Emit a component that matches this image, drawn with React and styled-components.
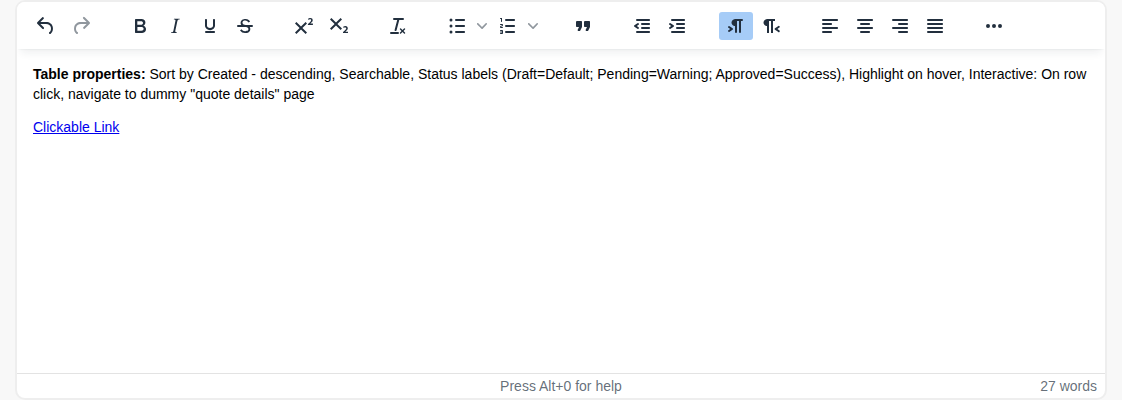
import React from "react";
import styled, { createGlobalStyle } from "styled-components";

const GlobalStyle = createGlobalStyle`
  *, *::before, *::after { box-sizing: border-box; }
  body {
    margin: 0;
    background: #f8f8f8;
    font-family: "Liberation Sans", Arial, sans-serif;
    overflow: hidden;
  }
`;

const Page = styled.div`
  height: 400px;
  padding: 0 15px;
`;

const Editor = styled.div`
  display: flex;
  flex-direction: column;
  height: 400px;
  border: 2px solid #eee;
  border-radius: 10px;
  background: #fff;
  overflow: hidden;
`;

const Toolbar = styled.div`
  position: relative;
  z-index: 1;
  flex: none;
  display: flex;
  gap: 25px;
  height: 47px;
  padding: 10px 12px 9px;
  background: #fff;
  box-shadow: 0 2px 2px -2px rgba(34, 47, 62, 0.1), 0 8px 8px -4px rgba(34, 47, 62, 0.07);
`;

const Group = styled.div`
  display: flex;
  gap: 1px;
`;

const ToolButton = styled.button`
  display: flex;
  align-items: center;
  justify-content: center;
  width: ${(p) => (p.$narrow ? 16 : 34)}px;
  height: 28px;
  padding: 0;
  border: 0;
  border-radius: 3px;
  background: ${(p) => (p.$active ? "#a6ccf7" : "transparent")};
  color: ${(p) => (p.$muted ? "rgba(34, 47, 62, 0.5)" : "#222f3e")};
`;

const SplitButton = styled.div`
  display: flex;
`;

const Glyph = styled.svg`
  display: block;
  flex: none;
  fill: currentColor;
`;

const Content = styled.div`
  flex: 1;
  padding: 15px 16px;
  font-size: 14px;
  line-height: 20px;
  color: #000;
`;

const Paragraph = styled.p`
  margin: 0 0 13px;
`;

const Link = styled.a`
  color: #0000ee;
  text-decoration: underline;
`;

const StatusBar = styled.div`
  flex: none;
  display: grid;
  grid-template-columns: 1fr auto 1fr;
  align-items: center;
  height: 25px;
  padding: 0 8px;
  border-top: 1px solid #e3e3e3;
  font-size: 14px;
  line-height: 24px;
  color: rgba(34, 47, 62, 0.7);
`;

const HelpText = styled.span`
  grid-column: 2;
`;

const WordCount = styled.span`
  justify-self: end;
`;

const bar = (x, y, w) =>
  `M${x + 1} ${y}h${w - 2}c.6 0 1 .4 1 1s-.4 1-1 1H${x + 1}a1 1 0 1 1 0-2Z`;
const dot = (x, y, r) => `M${x - r} ${y}a${r} ${r} 0 1 0 ${2 * r} 0a${r} ${r} 0 1 0 ${-2 * r} 0Z`;

const paths = {
  undo: "M6.4 8H12c3.7 0 6.2 2 6.8 5.1.6 2.7-.4 5.6-2.3 6.8a1 1 0 0 1-1-1.8c1.1-.6 1.8-2.7 1.4-4.6-.5-2.1-2.1-3.5-4.9-3.5H6.4l3.3 3.3a1 1 0 1 1-1.4 1.4l-5-5a1 1 0 0 1 0-1.4l5-5a1 1 0 0 1 1.4 1.4L6.4 8Z",
  redo: "M17.6 10H12c-2.8 0-4.4 1.4-4.9 3.5-.4 2 .3 4 1.4 4.6a1 1 0 1 1-1 1.8c-2-1.2-2.9-4.1-2.3-6.8.6-3 3-5.1 6.8-5.1h5.6l-3.3-3.3a1 1 0 1 1 1.4-1.4l5 5a1 1 0 0 1 0 1.4l-5 5a1 1 0 0 1-1.4-1.4l3.3-3.3Z",
  bold: "M7.8 19c-.3 0-.5 0-.6-.2l-.2-.5V5.7c0-.2 0-.4.2-.5l.6-.2h5c1.5 0 2.7.3 3.5 1 .7.6 1.1 1.4 1.1 2.5a3 3 0 0 1-.6 1.9c-.4.6-1 1-1.6 1.2.4.1.9.3 1.3.6s.8.7 1 1.2c.4.4.5 1 .5 1.6 0 1.3-.4 2.3-1.3 3-.8.7-2.1 1-3.8 1H7.8Zm5-8.3c.6 0 1.2-.1 1.6-.5.4-.3.6-.7.6-1.3 0-1.1-.8-1.7-2.3-1.7H9.3v3.5h3.4Zm.5 6c.7 0 1.3-.1 1.7-.4.4-.4.6-.9.6-1.5s-.2-1-.7-1.4c-.4-.3-1-.4-2-.4H9.4v3.8h4Z",
  italic: "m16.7 4.7-.1.9h-.3c-.6 0-1 0-1.4.3-.3.3-.4.6-.5 1.1l-2.1 9.8v.6c0 .5.4.8 1.4.8h.2l-.2.8H8l.2-.8h.2c1.1 0 1.8-.5 2-1.5l2-9.8.1-.5c0-.6-.4-.8-1.4-.8h-.3l.2-.9h5.8Z",
  underline: "M16 5c.6 0 1 .4 1 1v5.5a4 4 0 0 1-.4 1.8l-1 1.4a5.3 5.3 0 0 1-5.5 1 5 5 0 0 1-1.6-1c-.5-.4-.8-.9-1.1-1.4a4 4 0 0 1-.4-1.8V6c0-.6.4-1 1-1s1 .4 1 1v5.5c0 .3 0 .6.2 1l.6.7a3.3 3.3 0 0 0 2.2.8 3.4 3.4 0 0 0 2.2-.8c.3-.2.4-.5.6-.8l.2-.9V6c0-.6.4-1 1-1ZM8 17h8c.6 0 1 .4 1 1s-.4 1-1 1H8a1 1 0 0 1 0-2Z",
  strike: "M15.6 8.5c-.5-.7-1-1.1-1.3-1.3-.6-.4-1.3-.6-2-.6-2.7 0-2.8 1.7-2.8 2.1 0 1.6 1.8 2 3.2 2.3 4.4.9 4.6 2.8 4.6 3.9 0 1.4-.7 4.1-5 4.1A6.2 6.2 0 0 1 7 16.4l1.5-1.1c.4.6 1.6 2 3.7 2 1.6 0 2.5-.4 3-1.2.4-.8.3-2-.8-2.6-.7-.4-1.6-.7-2.9-1-1-.2-3.9-.8-3.9-3.6C7.6 6 10.3 5 12.4 5c2.9 0 4.2 1.6 4.7 2.4l-1.5 1.1ZM5 11h14a1 1 0 0 1 0 2H5a1 1 0 0 1 0-2Z",
  superscript: "M15 9.4 10.4 14l4.6 4.6-1.4 1.4L9 15.4 4.4 20 3 18.6 7.6 14 3 9.4 4.4 8 9 12.6 13.6 8 15 9.4Zm5.9 1.6h-5v-1l1-.8 1.7-1.6c.3-.5.5-.9.5-1.3 0-.3 0-.5-.2-.7-.2-.2-.5-.3-.9-.3l-.8.2-.7.4-.4-1.2c.2-.2.5-.4 1-.5.3-.2.8-.2 1.2-.2.8 0 1.4.2 1.8.6.4.4.6 1 .6 1.6 0 .5-.2 1-.5 1.5l-1.3 1.4-.6.5h2.6V11Z",
  subscript: "m10.4 10 4.6 4.6-1.4 1.4L9 11.4 4.4 16 3 14.6 7.6 10 3 5.4 4.4 4 9 8.6 13.6 4 15 5.4 10.4 10ZM21 19h-5v-1l1-.8 1.7-1.6c.3-.4.5-.8.5-1.2 0-.3 0-.6-.2-.7-.2-.2-.5-.3-.9-.3a2 2 0 0 0-.8.2l-.7.3-.4-1.1 1-.6 1.2-.2c.8 0 1.4.3 1.8.7.4.4.6.9.6 1.5s-.2 1.1-.5 1.6a8 8 0 0 1-1.3 1.3l-.6.6h2.6V19Z",
  clear: "M13.2 6a1 1 0 0 1 0 .2l-2.6 10a1 1 0 0 1-1 .8h-.2a.8.8 0 0 1-.8-1l2.6-10H8a1 1 0 1 1 0-2h9a1 1 0 0 1 0 2h-3.8ZM5 18h7a1 1 0 0 1 0 2H5a1 1 0 0 1 0-2Zm13 1.5L16.5 18 15 19.5a.7.7 0 0 1-1-1l1.5-1.5-1.5-1.5a.7.7 0 0 1 1-1l1.5 1.5 1.5-1.5a.7.7 0 0 1 1 1L17.5 17l1.5 1.5a.7.7 0 0 1-1 1Z",
  bullets: bar(10, 5, 10) + bar(10, 11, 10) + bar(10, 17, 10) + dot(6, 6, 1.5) + dot(6, 12, 1.5) + dot(6, 18, 1.5),
  numbers: bar(9, 5, 10) + bar(9, 11, 10) + bar(9, 17, 10) +
    "M6 4v3.5c0 .3-.2.5-.5.5a.5.5 0 0 1-.5-.5V5h-.5a.5.5 0 0 1 0-1H6Zm-1 8.8.2.2h1.3c.3 0 .5.2.5.5s-.2.5-.5.5H4.9a1 1 0 0 1-.9-1V13c0-.4.3-.8.6-1l1.2-.4.2-.3a.2.2 0 0 0-.2-.2H4.5a.5.5 0 0 1-.5-.5c0-.3.2-.5.5-.5h1.6c.5 0 .9.4.9 1v.1c0 .4-.3.8-.6 1l-1.2.4-.2.3ZM7 17v2c0 .6-.4 1-1 1H4.5a.5.5 0 0 1 0-1h1.2c.2 0 .3-.1.3-.3 0-.2-.1-.3-.3-.3H4.4a.4.4 0 1 1 0-.8h1.3c.2 0 .3-.1.3-.3 0-.2-.1-.3-.3-.3H4.5a.5.5 0 1 1 0-1H6c.6 0 1 .4 1 1Z",
  quote: "M7.5 17h.9c.4 0 .7-.2.9-.6L11 13V8c0-.6-.4-1-1-1H6a1 1 0 0 0-1 1v4c0 .6.4 1 1 1h2l-1.3 2.7a1 1 0 0 0 .8 1.3Zm8 0h.9c.4 0 .7-.2.9-.6L19 13V8c0-.6-.4-1-1-1h-4a1 1 0 0 0-1 1v4c0 .6.4 1 1 1h2l-1.3 2.7a1 1 0 0 0 .8 1.3Z",
  outdent: bar(6, 5, 14) + bar(11, 9, 9) + bar(11, 13, 9) + bar(6, 17, 14) +
    "M8.6 13.2a1 1 0 0 1-1.2 1.6l-3-2a1 1 0 0 1 0-1.6l3-2a1 1 0 0 1 1.2 1.6L6.8 12l1.8 1.2Z",
  indent: bar(6, 5, 14) + bar(11, 9, 9) + bar(11, 13, 9) + bar(6, 17, 14) +
    "M4.4 13.2 6.2 12l-1.8-1.2a1 1 0 0 1 1.2-1.6l3 2a1 1 0 0 1 0 1.6l-3 2a1 1 0 1 1-1.2-1.6Z",
  ltr: "M11 5h7a1 1 0 0 1 0 2h-1v11a1 1 0 0 1-2 0V7h-2v11a1 1 0 0 1-2 0v-6c-.5 0-1 0-1.4-.3A3.4 3.4 0 0 1 7.8 10a3.3 3.3 0 0 1 0-2.8 3.4 3.4 0 0 1 1.8-1.8L11 5ZM4.4 16.2 6.2 15l-1.8-1.2a1 1 0 0 1 1.2-1.6l3 2a1 1 0 0 1 0 1.6l-3 2a1 1 0 1 1-1.2-1.6Z",
  rtl: "M8 5h8v2h-2v12h-2V7h-2v12H8v-7c-.5 0-1 0-1.4-.3A3.4 3.4 0 0 1 4.8 10a3.3 3.3 0 0 1 0-2.8 3.4 3.4 0 0 1 1.8-1.8L8 5Zm12 11.2a1 1 0 1 1-1 1.6l-3-2a1 1 0 0 1 0-1.6l3-2a1 1 0 1 1 1 1.6L18.4 15l1.8 1.2Z",
  alignLeft: bar(4, 5, 16) + bar(4, 9, 10) + bar(4, 13, 16) + bar(4, 17, 10),
  alignCenter: bar(4, 5, 16) + bar(7, 9, 10) + bar(4, 13, 16) + bar(7, 17, 10),
  alignRight: bar(4, 5, 16) + bar(10, 9, 10) + bar(4, 13, 16) + bar(10, 17, 10),
  justify: bar(4, 5, 16) + bar(4, 9, 16) + bar(4, 13, 16) + bar(4, 17, 16),
  more: dot(6, 12, 2) + dot(12, 12, 2) + dot(18, 12, 2),
  chevron: "M8.7 2.2c.3-.3.8-.3 1 0 .4.4.4.9 0 1.2L5.7 7.8c-.3.3-.9.3-1.2 0L.2 3.4a.8.8 0 0 1 0-1.2c.3-.3.8-.3 1.1 0L5 6l3.7-3.8Z",
};

function Tool({ name, label, active, muted }) {
  return (
    <ToolButton aria-label={label} $active={active} $muted={muted}>
      <Glyph width="24" height="24" viewBox="0 0 24 24">
        <path d={paths[name]} />
      </Glyph>
    </ToolButton>
  );
}

function SplitTool({ name, label }) {
  return (
    <SplitButton>
      <Tool name={name} label={label} />
      <ToolButton aria-label={`${label} menu`} $narrow $muted>
        <Glyph width="10" height="10" viewBox="0 0 10 10">
          <path d={paths.chevron} />
        </Glyph>
      </ToolButton>
    </SplitButton>
  );
}

export default function App() {
  return (
    <Page>
      <GlobalStyle />
      <Editor>
        <Toolbar role="toolbar">
          <Group>
            <Tool name="undo" label="Undo" />
            <Tool name="redo" label="Redo" muted />
          </Group>
          <Group>
            <Tool name="bold" label="Bold" />
            <Tool name="italic" label="Italic" />
            <Tool name="underline" label="Underline" />
            <Tool name="strike" label="Strikethrough" />
          </Group>
          <Group>
            <Tool name="superscript" label="Superscript" />
            <Tool name="subscript" label="Subscript" />
          </Group>
          <Group>
            <Tool name="clear" label="Clear formatting" />
          </Group>
          <Group>
            <SplitTool name="bullets" label="Bullet list" />
            <SplitTool name="numbers" label="Numbered list" />
          </Group>
          <Group>
            <Tool name="quote" label="Blockquote" />
          </Group>
          <Group>
            <Tool name="outdent" label="Decrease indent" />
            <Tool name="indent" label="Increase indent" />
          </Group>
          <Group>
            <Tool name="ltr" label="Left to right" active />
            <Tool name="rtl" label="Right to left" />
          </Group>
          <Group>
            <Tool name="alignLeft" label="Align left" />
            <Tool name="alignCenter" label="Align center" />
            <Tool name="alignRight" label="Align right" />
            <Tool name="justify" label="Justify" />
          </Group>
          <Group>
            <Tool name="more" label="More" />
          </Group>
        </Toolbar>
        <Content>
          <Paragraph>
            <strong>Table properties:</strong> Sort by Created - descending, Searchable, Status labels
            (Draft=Default; Pending=Warning; Approved=Success), Highlight on hover, Interactive: On row
            click, navigate to dummy "quote details" page
          </Paragraph>
          <Paragraph>
            <Link href="#">Clickable Link</Link>
          </Paragraph>
        </Content>
        <StatusBar>
          <HelpText>Press Alt+0 for help</HelpText>
          <WordCount>27 words</WordCount>
        </StatusBar>
      </Editor>
    </Page>
  );
}
